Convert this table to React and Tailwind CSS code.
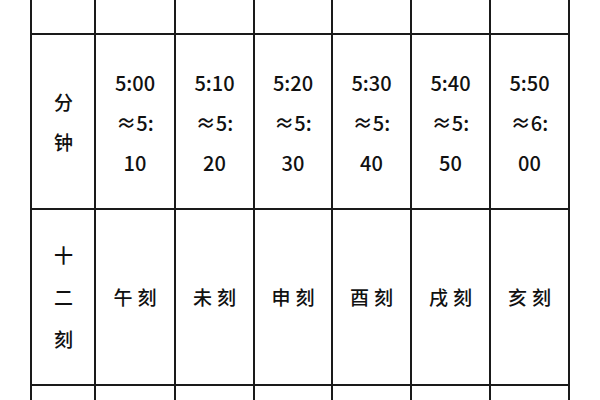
import React from "react";

const widths = ["w-[62px]", "w-[78px]", "w-[77px]", "w-[76px]", "w-[77px]", "w-[77px]", "w-[77px]"];

const times = [
  ["5:00", "≈5:", "10"],
  ["5:10", "≈5:", "20"],
  ["5:20", "≈5:", "30"],
  ["5:30", "≈5:", "40"],
  ["5:40", "≈5:", "50"],
  ["5:50", "≈6:", "00"],
];
const ke = ["午刻", "未刻", "申刻", "酉刻", "戌刻", "亥刻"];

export default function App() {
  return (
    <div
      className="w-[600px] h-[400px] bg-white overflow-hidden text-[#111] font-medium"
      style={{ fontFamily: '"Noto Sans CJK SC", "Noto Sans", sans-serif' }}
    >
      <div className="ml-[30px] mt-[-20px] w-fit bg-[#1a1a1a] px-[2px] flex flex-col gap-[2px]">
        <div className="flex gap-[2px] h-[53px]">
          {widths.map((w, i) => (
            <div key={i} className={`${w} bg-white`} />
          ))}
        </div>
        <div className="flex gap-[2px] h-[173px]">
          <div className={`${widths[0]} bg-white flex flex-col items-center justify-center gap-[14px] text-[19px] leading-[26px] pl-[1px]`}>
            <span>分</span>
            <span>钟</span>
          </div>
          {times.map((t, i) => (
            <div key={i} className={`${widths[i + 1]} bg-white flex flex-col items-center justify-center text-[20px] leading-[40px] pt-[2px]`}>
              {t.map((s, j) => (
                <span key={j}>{s}</span>
              ))}
            </div>
          ))}
        </div>
        <div className="flex gap-[2px] h-[174px]">
          <div className={`${widths[0]} bg-white flex flex-col items-center justify-center text-[19px] leading-[42px] pl-[1px]`}>
            <span>十</span>
            <span>二</span>
            <span>刻</span>
          </div>
          {ke.map((k, i) => (
            <div key={i} className={`${widths[i + 1]} bg-white flex items-center justify-center text-[19px] tracking-[5px] pl-[5px]`}>
              {k}
            </div>
          ))}
        </div>
        <div className="flex gap-[2px] h-[40px]">
          {widths.map((w, i) => (
            <div key={i} className={`${w} bg-white`} />
          ))}
        </div>
      </div>
    </div>
  );
}
